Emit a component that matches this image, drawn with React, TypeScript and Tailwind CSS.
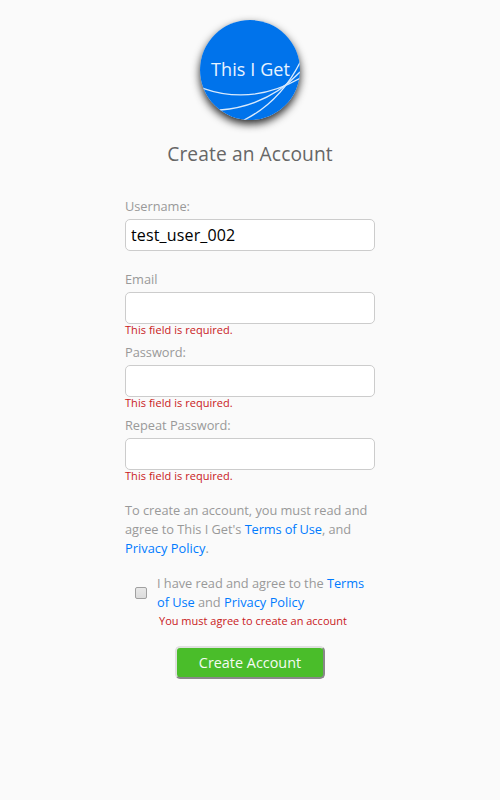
import { useState } from 'react';

function Logo() {
  return (
    <div className="mx-auto h-[100px] w-[100px] rounded-full shadow-[0_4px_8px_rgba(0,0,0,0.85)]">
      <svg width="100" height="100" viewBox="0 0 100 100" className="block">
        <defs>
          <clipPath id="disc">
            <circle cx="50" cy="50" r="50" />
          </clipPath>
        </defs>
        <circle cx="50" cy="50" r="50" fill="#0073eb" />
        <g clipPath="url(#disc)" fill="none" stroke="#d9eafc" strokeWidth="1.3">
          <path d="M3 68.3 Q52 85.5 100 58.3" />
          <path d="M20 90 Q68 86 100 52" />
          <path d="M44 100 Q80 82 100 42.5" />
        </g>
        <text x="11" y="56" fontSize="18" fill="#e8f3ff" textLength="79">
          This I Get
        </text>
      </svg>
    </div>
  );
}

interface FieldProps {
  label: string;
  type?: string;
  initial?: string;
  error?: string;
}

function Field({ label, type = 'text', initial = '', error }: FieldProps) {
  const [value, setValue] = useState(initial);
  return (
    <label className="block h-[73px]">
      <span className="block h-[22px] leading-[19px] tracking-[-0.03px] text-[#999]">{label}</span>
      <input
        type={type}
        value={value}
        onChange={(e) => setValue(e.target.value)}
        className="block h-8 w-full rounded-[5px] border border-[#ccc] bg-white px-[5px] text-base tracking-[0.15px] text-black outline-none"
      />
      {error && (
        <span className="block text-[11px] leading-[11px] tracking-[0.04px] text-[#c9201c]">{error}</span>
      )}
    </label>
  );
}

export default function App() {
  const required = 'This field is required.';
  return (
    <main className="min-h-screen bg-[#fafafa] pt-5 font-['Open_Sans','Noto_Sans',sans-serif]">
      <Logo />
      <h1 className="mt-5 text-center text-[19.2px] leading-7 tracking-[0.1px] text-[#666]">Create an Account</h1>
      <form className="mx-auto mt-[29px] w-[250px] text-[12.8px] leading-[19px] text-[#999]">
        <Field label="Username:" initial="test_user_002" />
        <Field label="Email" error={required} />
        <Field label="Password:" type="password" error={required} />
        <Field label="Repeat Password:" type="password" error={required} />
        <p className="mt-3 tracking-[-0.03px]">
          To create an account, you must read and agree to This I Get's{' '}
          <a className="tracking-[-0.12px] text-[#007bff]">Terms of Use</a>, and{' '}
          <a className="tracking-[0.04px] text-[#007bff]">Privacy Policy</a>.
        </p>
        <div className="mt-4 flex pl-[10px]">
          <input
            type="checkbox"
            className="mt-[13px] h-3 w-3 shrink-0 appearance-none rounded-[2px] border border-[#a0a0a0] bg-linear-to-b from-[#e8e8e8] to-[#dcdcdc]"
          />
          <div className="ml-[10px] w-[212px]">
            <p className="tracking-[-0.04px]">
              I have read and agree to the <a className="text-[#007bff]">Terms of Use</a> and{' '}
              <a className="tracking-[0.02px] text-[#007bff]">Privacy Policy</a>
            </p>
            <p className="pl-[2px] text-[11px] leading-[18px] text-[#c9201c]">You must agree to create an account</p>
          </div>
        </div>
        <button
          type="button"
          className="mx-auto mt-4 block h-[33px] w-[150px] rounded-[5px] border-2 border-t-[#e0e0e0] border-r-[#888] border-b-[#888] border-l-[#e0e0e0] bg-[#4abd2a] text-[14.4px] leading-[28px] text-[#f4fbf2]"
        >
          Create Account
        </button>
      </form>
    </main>
  );
}
